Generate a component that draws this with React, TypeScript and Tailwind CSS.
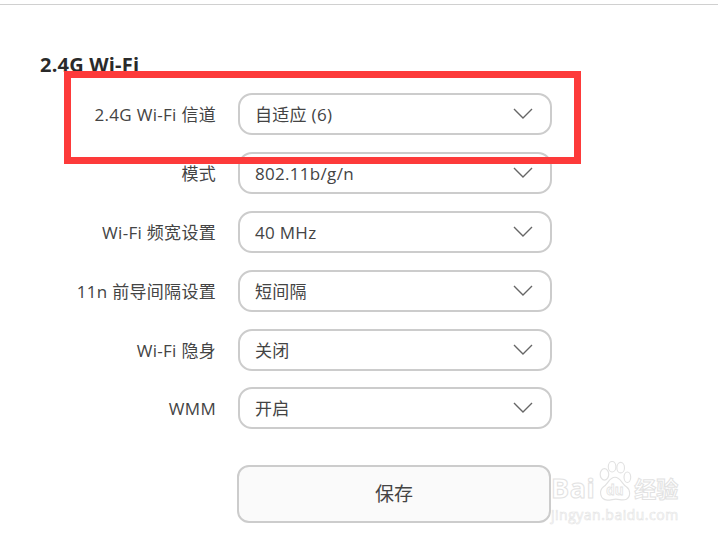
import React from 'react'

const rows = [
  { label: '2.4G Wi-Fi 信道', value: '自适应 (6)' },
  { label: '模式', value: '802.11b/g/n' },
  { label: 'Wi-Fi 频宽设置', value: '40 MHz' },
  { label: '11n 前导间隔设置', value: '短间隔' },
  { label: 'Wi-Fi 隐身', value: '关闭' },
  { label: 'WMM', value: '开启' },
]

const Chevron = () => (
  <svg width="20" height="12" viewBox="0 0 20 12" fill="none" className="shrink-0">
    <path d="M1 1 L10 10 L19 1" stroke="#666" strokeWidth="1.4" />
  </svg>
)

const Watermark = () => (
  <div className="absolute left-[551px] top-[459px] w-[140px] whitespace-nowrap select-none">
    <div className="flex items-end h-[44px]">
      <span className="text-[27px] leading-[30px] font-bold text-white tracking-[0.5px] [-webkit-text-stroke:1px_#e2e2e2]">Bai</span>
      <svg width="36" height="42" viewBox="0 0 36 44" fill="none" stroke="#e2e2e2" strokeWidth="1.2" className="shrink-0 ml-[1px]">
        <ellipse cx="8" cy="14" rx="4.5" ry="6" />
        <ellipse cx="16" cy="6" rx="4" ry="5.5" />
        <ellipse cx="25" cy="7" rx="4" ry="5.5" />
        <ellipse cx="32" cy="17" rx="3.5" ry="5.5" />
        <path d="M19 17 C13 17 12 24 7 27 C2 31 3 40 11 41 C15 41 17 40 20 40 C24 40 27 42 31 40 C36 37 35 30 31 27 C26 24 25 17 19 17 Z" />
        <text x="19" y="36" textAnchor="middle" fontSize="14" fontWeight="700" fill="#ffffff" stroke="#e2e2e2" strokeWidth="0.8">du</text>
      </svg>
      <span className="ml-[2px] text-[22px] leading-[30px] text-white font-bold [-webkit-text-stroke:1px_#e2e2e2]">经验</span>
    </div>
    <div className="mt-[5px] text-[14px] leading-[14px] text-white tracking-[0.5px] [-webkit-text-stroke:0.6px_#e4e4e4]">jingyan.baidu.com</div>
  </div>
)

const App = () => {
  return (
    <div
      className="relative w-[718px] h-[538px] overflow-hidden bg-white text-[#333] font-['Open_Sans','Noto_Sans_CJK_SC',sans-serif]"
    >
      <div className="mt-1 h-px bg-[#d0d0d0]"></div>

      <h2 className="ml-10 mt-[48px] text-[20px] leading-6 font-bold tracking-[0.2px] text-[#2a2a2a]">2.4G Wi-Fi</h2>

      <div className="mt-[16px] flex flex-col gap-[17px]">
        {rows.map((row) => (
          <div key={row.label} className="flex items-center last:-mt-px">
            <div className="w-[216px] pt-px text-right text-[17px] tracking-[0.3px] text-[#444]">{row.label}</div>
            <div className="ml-[22px] w-[314px] h-[42px] flex items-center justify-between pl-[15px] pr-[17px] rounded-[14px] border-2 border-[#cccccc] text-[17px] tracking-[0.3px] text-[#444]">
              <span className="pt-px">{row.value}</span>
              <Chevron />
            </div>
          </div>
        ))}
      </div>

      <button className="block ml-[237px] mt-[36px] w-[314px] h-[58px] rounded-[12px] border-2 border-[#cccccc] bg-[#fafafa] text-[19px] text-[#444]">
        保存
      </button>

      {/* red annotation over the first row */}
      <div className="absolute left-[64px] top-[71px] w-[517px] h-[93px] border-[7px] border-[#fd3a3a]"></div>
      <Watermark />
    </div>
  )
}

export default App
